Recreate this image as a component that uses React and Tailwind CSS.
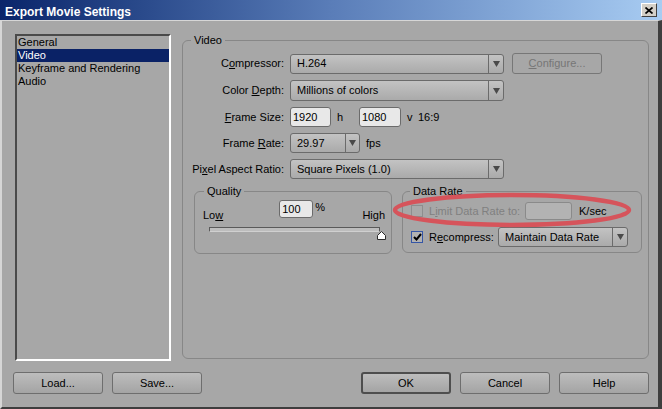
import React from "react";

const Arrow = () => (
  <svg width="7" height="6" viewBox="0 0 7 6">
    <polygon points="0,0 7,0 3.5,6" fill="#4a4a4a" />
  </svg>
);

const Select = ({ className, children, arrowClass = "w-[15px]" }) => (
  <div
    className={`flex h-[20px] rounded-[3px] border border-[#6b6b6b] bg-linear-to-b from-[#c3c3c3] to-[#aaaaaa] ${className}`}
  >
    <div className="flex-1 flex items-center pl-[6px] whitespace-nowrap">{children}</div>
    <div className={`${arrowClass} border-l border-[#6b6b6b] flex items-center justify-center`}>
      <Arrow />
    </div>
  </div>
);

const Input = ({ className, children }) => (
  <div
    className={`flex items-center rounded-[3px] border border-[#6b6b6b] bg-[#e8e8e8] pl-[2px] ${className}`}
  >
    {children}
  </div>
);

const Button = ({ children, strong }) => (
  <button
    className={`w-[90px] h-[22px] rounded-[3px] bg-linear-to-b from-[#bdbdbd] to-[#a4a4a4] ${
      strong ? "border-2 border-[#4e4e4e]" : "border border-[#6e6e6e]"
    }`}
  >
    {children}
  </button>
);

const Row = ({ label, children, className = "" }) => (
  <div className={`flex items-center ${className}`}>
    <div className="w-[101px] text-right whitespace-nowrap">{label}</div>
    <div className="ml-[6px] flex items-center">{children}</div>
  </div>
);

const u = (s) => <span className="underline">{s}</span>;

export default function App() {
  return (
    <div className="relative w-[662px] h-[409px] bg-[#a7a7a7] flex flex-col overflow-hidden text-[11px] leading-[13px] text-black font-['Liberation_Sans',Arial,sans-serif]">
      {/* title bar */}
      <div className="h-[20px] flex items-center justify-between pl-[5px] pr-[5px] bg-linear-to-r from-[#0a246a] via-[#5a7db8] to-[#a8ccf2]">
        <div className="pt-[4px] text-white font-bold text-[12px]">Export Movie Settings</div>
        <div className="w-[16px] h-[14px] bg-[#d4d0c8] border border-t-white border-l-white border-r-[#404040] border-b-[#404040] flex items-center justify-center">
          <svg width="8" height="7" viewBox="0 0 8 7">
            <path d="M0.5 0.5 L7.5 6.5 M7.5 0.5 L0.5 6.5" stroke="#000" strokeWidth="1.7" />
          </svg>
        </div>
      </div>

      <div className="flex-1 flex flex-col pl-[13px] pt-[13px] border-t border-t-[#d6d6d6] border-l-2 border-l-[#d6d6d6] border-r-4 border-r-[#3e3e3e] border-b-2 border-b-[#3e3e3e]">
        <div className="flex h-[327px]">
          {/* list */}
          <div className="w-[156px] h-[327px] border-2 border-t-[#4a4a4a] border-l-[#4a4a4a] border-r-white border-b-white">
            <div className="h-[13px] pl-[1px]">General</div>
            <div className="h-[13px] pl-[1px] bg-[#0a2266] text-white">Video</div>
            <div className="h-[13px] pl-[1px]">Keyframe and Rendering</div>
            <div className="h-[13px] pl-[1px]">Audio</div>
          </div>

          {/* video group */}
          <fieldset className="ml-[11px] w-[467px] h-[325px] rounded-[6px] border border-[#878787]">
            <legend className="ml-[8px] px-[3px] leading-[13px]">Video</legend>

            <Row className="mt-[6px] h-[21px]" label={<>C{u("o")}mpressor:</>}>
              <Select className="w-[214px]">H.264</Select>
              <div className="ml-[8px] w-[90px] h-[21px] rounded-[3px] border border-[#777] flex items-center justify-center text-[#767676]">
                {u("C")}onfigure...
              </div>
            </Row>

            <Row className="mt-[6px] h-[21px]" label={<>Color {u("D")}epth:</>}>
              <Select className="w-[214px] h-[21px]">Millions of colors</Select>
            </Row>

            <Row className="mt-[6px] h-[20px]" label={<>{u("F")}rame Size:</>}>
              <Input className="w-[41px] h-[20px]">1920</Input>
              <span className="ml-[6px] w-[16px]">h</span>
              <Input className="ml-[6px] w-[42px] h-[20px]">1080</Input>
              <span className="ml-[6px] w-[11px]">v</span>
              <span>16:9</span>
            </Row>

            <Row className="mt-[6px] h-[20px]" label={<>Frame {u("R")}ate:</>}>
              <Select className="w-[70px]" arrowClass="w-[14px]">29.97</Select>
              <span className="ml-[6px]">fps</span>
            </Row>

            <Row className="mt-[6px] h-[20px]" label={<>Pi{u("x")}el Aspect Ratio:</>}>
              <Select className="w-[214px]">Square Pixels (1.0)</Select>
            </Row>

            <div className="flex ml-[11px] mt-[6px]">
              {/* quality */}
              <fieldset className="w-[198px] h-[69px] rounded-[6px] border border-[#878787]">
                <legend className="ml-[9px] px-[3px] leading-[13px]">Quality</legend>
                <div className="mt-[2px] h-[22px] flex items-end">
                  <span className="ml-[8px]">Lo{u("w")}</span>
                  <div className="ml-[56px] self-start flex items-start">
                    <Input className="w-[34px] h-[18px]">100</Input>
                    <span className="ml-[2px] mt-[1px]">%</span>
                  </div>
                  <span className="ml-auto mr-[6px]">High</span>
                </div>
                <div className="relative mt-[5px] ml-[14px] w-[171px] h-[5px] bg-[#bdbdbd] border border-t-[#5a5a5a] border-l-[#5a5a5a] border-r-[#5a5a5a] border-b-[#d0d0d0]">
                  <svg className="absolute left-[167px] top-[3px]" width="9" height="9" viewBox="0 0 9 9">
                    <polygon points="0.5,4.5 4.5,0.5 8.5,4.5 8.5,8.5 0.5,8.5" fill="#fff" stroke="#2a2a2a" />
                  </svg>
                </div>
              </fieldset>

              {/* data rate */}
              <fieldset className="ml-[10px] w-[240px] h-[68px] rounded-[6px] border border-[#878787]">
                <legend className="ml-[7px] px-[3px] leading-[13px]">Data Rate</legend>
                <div className="mt-[4px] h-[18px] flex items-center">
                  <div className="ml-[8px] w-[12px] h-[12px] border border-[#8e8e8e] bg-[#a9a9a9]" />
                  <span className="ml-[6px] w-[96px] whitespace-nowrap text-[#808080]">
                    L{u("i")}mit Data Rate to:
                  </span>
                  <div className="w-[47px] h-[18px] rounded-[3px] border border-[#8a8a8a] bg-[#b3b3b3]" />
                  <span className="ml-[7px]">K/sec</span>
                </div>
                <div className="mt-[7px] h-[20px] flex items-center">
                  <div className="ml-[8px] w-[12px] h-[12px] border border-[#3556a6] bg-[#b2b2b2] flex items-center justify-center">
                    <svg width="9" height="8" viewBox="0 0 9 8">
                      <path d="M1 4 L3.5 6.5 L8 1" fill="none" stroke="#000" strokeWidth="2" />
                    </svg>
                  </div>
                  <span className="ml-[6px] w-[69px]">R{u("e")}compress:</span>
                  <Select className="w-[130px]">Maintain Data Rate</Select>
                </div>
              </fieldset>
            </div>
          </fieldset>
        </div>

        {/* buttons */}
        <div className="-ml-[2px] mt-[11px] mr-[9px] flex justify-between">
          <div className="flex gap-[9px]">
            <Button>Load...</Button>
            <Button>Save...</Button>
          </div>
          <div className="flex gap-[9px]">
            <Button strong>OK</Button>
            <Button>Cancel</Button>
            <Button>Help</Button>
          </div>
        </div>
      </div>

      {/* annotation ellipse */}
      <svg className="absolute left-[391px] top-[191px]" width="242" height="38" viewBox="0 0 242 38">
        <ellipse cx="121" cy="19" rx="117" ry="15" fill="none" stroke="#d6545b" strokeWidth="4.5" />
      </svg>
    </div>
  );
}
